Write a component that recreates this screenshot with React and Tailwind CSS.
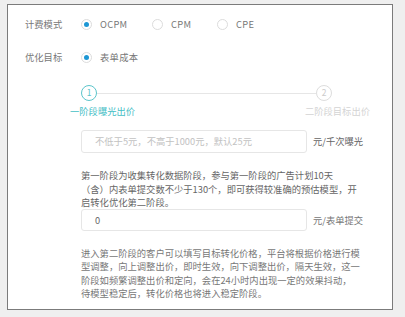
import React from "react";

const font = { fontFamily: '"Noto Sans CJK SC", "Noto Sans", sans-serif' };

const Radio = ({ checked, label, width }) => (
  <label className={`flex items-center ${width}`}>
    <span className="w-[11px] h-[11px] rounded-full border border-[#dcdcdc] flex items-center justify-center">
      {checked && <span className="w-[5px] h-[5px] rounded-full bg-[#1d97d4]" />}
    </span>
    <span className="ml-[8px] text-[#777] tracking-[0.3px]">{label}</span>
  </label>
);

const App = () => {
  return (
    <div
      className="w-[405px] h-[317px] bg-[#efefef] pt-[4px] pl-[7px] text-[9.3px] leading-[13.3px]"
      style={font}
    >
      <div className="w-[386px] h-[306px] border border-[#7b7b7b] bg-white pl-[17px] pt-[5px]">
        {/* 计费模式 */}
        <div className="flex items-center h-[30px]">
          <div className="w-[56px] text-[#777]">计费模式</div>
          <Radio checked label="OCPM" width="w-[71px]" />
          <Radio label="CPM" width="w-[65px]" />
          <Radio label="CPE" width="w-[60px]" />
        </div>

        {/* 优化目标 */}
        <div className="flex items-center h-[30px] mt-[3px]">
          <div className="w-[56px] text-[#777]">优化目标</div>
          <Radio checked label="表单成本" width="w-[80px]" />
        </div>

        <div className="ml-[56px]">
          {/* steps */}
          <div className="flex items-center w-[251px] mt-[12px]">
            <div className="w-[16px] h-[16px] rounded-full border border-[#5cc5cb] text-[#5cc5cb] flex items-center justify-center text-[8.5px]">
              1
            </div>
            <div className="flex-1 h-px bg-[#e6e6e6]" />
            <div className="w-[16px] h-[16px] rounded-full border border-[#dddddd] text-[#cccccc] flex items-center justify-center text-[8.5px]">
              2
            </div>
          </div>
          <div className="flex justify-between w-[300px] ml-[-11px] mt-[4px]">
            <span className="text-[#45bec6]">一阶段曝光出价</span>
            <span className="text-[#d4d4d4]">二阶段目标出价</span>
          </div>

          {/* 曝光出价 */}
          <div className="flex items-center mt-[12px]">
            <div className="w-[226px] h-[23px] border border-[#e6e6e6] rounded-[3px] px-[13px] flex items-center text-[#c2c2c2]">
              不低于5元，不高于1000元，默认25元
            </div>
            <span className="ml-[6px] text-[#666]">元/千次曝光</span>
          </div>

          <p className="mt-[16px] text-[#666] w-[290px]">
            第一阶段为收集转化数据阶段，参与第一阶段的广告计划10天
            <br />
            （含）内表单提交数不少于130个，即可获得较准确的预估模型，开
            <br />
            启转化优化第二阶段。
          </p>

          {/* 目标出价 */}
          <div className="flex items-center">
            <div className="w-[226px] h-[22px] border border-[#e6e6e6] rounded-[3px] px-[13px] flex items-center text-[#666]">
              0
            </div>
            <span className="ml-[6px] text-[#777]">元/表单提交</span>
          </div>

          <p className="mt-[16px] text-[#777] w-[290px]">
            进入第二阶段的客户可以填写目标转化价格，平台将根据价格进行模
            <br />
            型调整，向上调整出价，即时生效，向下调整出价，隔天生效，这一
            <br />
            阶段如频繁调整出价和定向，会在24小时内出现一定的效果抖动，
            <br />
            待模型稳定后，转化价格也将进入稳定阶段。
          </p>
        </div>
      </div>
    </div>
  );
};

export default App;
